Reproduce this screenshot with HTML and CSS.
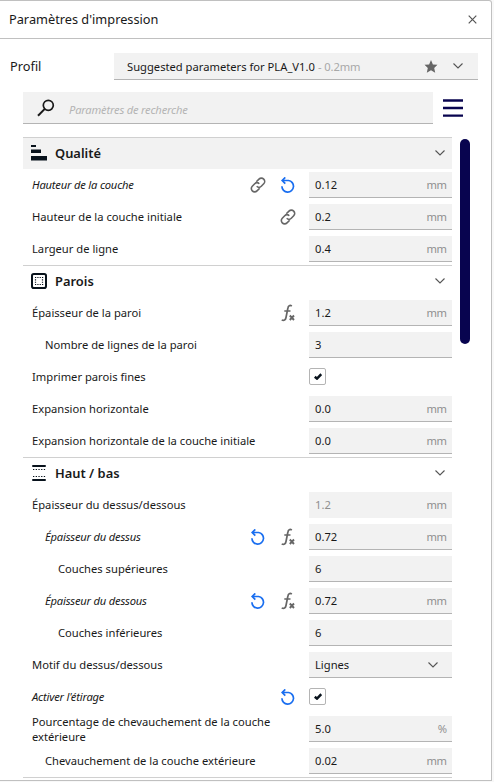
FILE: index.html
```html
<!DOCTYPE html>
<html lang="fr">
<head>
    <meta charset="UTF-8">
    <meta name="viewport" content="width=device-width, initial-scale=1.0">
    <title>Paramètres d'impression</title>
    <link rel="stylesheet" href="styles.css">
</head>
<body>

<!-- shared icons -->
<svg class="sprite">
    <symbol id="chevron" viewBox="0 0 10 6"><path d="M.5 .5L5 5L9.500 .5" fill="none" stroke="currentColor" stroke-width="1.1"/></symbol>
    <symbol id="link" viewBox="0 0 16 16"><path d="M6.300 4.800L9 2.100a3.300 3.300 0 0 1 4.700 4.700L11.300 9.200a3.300 3.300 0 0 1-4.600 0M9.700 11.200L7 13.900a3.300 3.300 0 0 1-4.700-4.700L4.700 6.800a3.300 3.300 0 0 1 4.600 0" fill="none" stroke="currentColor" stroke-width="1.6"/></symbol>
    <symbol id="undo" viewBox="0 0 16 16"><path d="M2.200 3.500H8.500a5.800 5.800 0 1 1-6.600 5.800M5.300 .4L2.200 3.500L5.300 6.600" fill="none" stroke="currentColor" stroke-width="1.7"/></symbol>
    <symbol id="fx" viewBox="0 0 16 18"><path d="M11.800 2.200C10 .7 8.300 1.700 7.900 4L6 13.500C5.600 16 4 17 1.700 16M4.300 7H10.500" fill="none" stroke="currentColor" stroke-width="1.7"/><path d="M9.800 11.500L14 16M14 11.500L9.800 16" stroke="currentColor" stroke-width="1.9"/></symbol>
    <symbol id="check" viewBox="0 0 8 7"><path d="M.8 3.700L3 5.600L7.300 1.200" fill="none" stroke="currentColor" stroke-width="2.500"/></symbol>
</svg>

<div class="panel">
    <div class="header">
        <span class="title">Paramètres d'impression</span>
        <svg class="close" viewBox="0 0 9 9"><path d="M.7 .7L8.300 8.300M8.300 .7L.7 8.300" stroke="currentColor" stroke-width="1.2"/></svg>
    </div>

    <div class="profile">
        <span class="profile-label">Profil</span>
        <div class="profile-select">
            <span class="profile-name">Suggested parameters for PLA_V1.0</span>
            <span class="profile-detail">- 0.2mm</span>
            <svg class="star" viewBox="0 0 14 13"><path d="M7 0L8.900 4.400L13.500 4.800L10.200 8L11.200 12.700L7 10.300L2.800 12.700L3.800 8L.5 4.800L5.100 4.400Z" fill="currentColor"/></svg>
            <svg class="chevron"><use href="#chevron"/></svg>
        </div>
    </div>

    <div class="search-row">
        <div class="search">
            <svg class="search-icon" viewBox="0 0 18 18"><circle cx="11.300" cy="6.300" r="5" fill="none" stroke="currentColor" stroke-width="1.700"/><path d="M7.800 9.900L1 16.700" stroke="currentColor" stroke-width="2"/></svg>
            <span class="placeholder">Paramètres de recherche</span>
        </div>
        <svg class="menu" viewBox="0 0 20 18"><path d="M0 1.500H20M0 9H20M0 16.700H20" stroke="currentColor" stroke-width="2.300"/></svg>
    </div>

    <div class="content">
        <div class="settings">
            <div class="category active">
                <svg class="category-icon" viewBox="0 0 16 16"><path d="M0 0H5V2H0ZM0 4.500H10V8H0ZM0 11H16V15.500H0Z" fill="currentColor"/></svg>
                <span class="category-name">Qualité</span>
                <svg class="chevron"><use href="#chevron"/></svg>
            </div>
            <div class="row changed">
                <span class="label">Hauteur de la couche</span>
                <svg class="icon"><use href="#link"/></svg>
                <svg class="icon undo"><use href="#undo"/></svg>
                <div class="field"><span>0.12</span><span class="unit">mm</span></div>
            </div>
            <div class="row">
                <span class="label">Hauteur de la couche initiale</span>
                <svg class="icon"><use href="#link"/></svg>
                <div class="field"><span>0.2</span><span class="unit">mm</span></div>
            </div>
            <div class="row">
                <span class="label">Largeur de ligne</span>
                <div class="field"><span>0.4</span><span class="unit">mm</span></div>
            </div>

            <div class="category">
                <svg class="category-icon" viewBox="0 0 16 16"><rect x="1" y="1" width="14" height="14" rx="1.800" fill="none" stroke="currentColor" stroke-width="2"/><path d="M4 4.500H13M4 11.500H13" stroke="currentColor" stroke-width="1.200" stroke-dasharray="1.200 1.130"/><path d="M4.500 6.330V11M11.500 6.330V11" stroke="currentColor" stroke-width="1.200" stroke-dasharray="1.200 1.130"/></svg>
                <span class="category-name">Parois</span>
                <svg class="chevron"><use href="#chevron"/></svg>
            </div>
            <div class="row">
                <span class="label">Épaisseur de la paroi</span>
                <svg class="icon fx"><use href="#fx"/></svg>
                <div class="field"><span>1.2</span><span class="unit">mm</span></div>
            </div>
            <div class="row level-1">
                <span class="label">Nombre de lignes de la paroi</span>
                <div class="field"><span>3</span></div>
            </div>
            <div class="row">
                <span class="label">Imprimer parois fines</span>
                <div class="control"><div class="checkbox"><svg><use href="#check"/></svg></div></div>
            </div>
            <div class="row">
                <span class="label">Expansion horizontale</span>
                <div class="field"><span>0.0</span><span class="unit">mm</span></div>
            </div>
            <div class="row">
                <span class="label">Expansion horizontale de la couche initiale</span>
                <div class="field"><span>0.0</span><span class="unit">mm</span></div>
            </div>

            <div class="category">
                <svg class="category-icon" viewBox="0 0 16 16"><path d="M2 1H14M2 15H14" stroke="currentColor" stroke-width="2" stroke-linecap="round"/><path d="M2 4.500H14.500M2 11.500H14.500" stroke="currentColor" stroke-width="1.200" stroke-dasharray="1.300 1.400"/></svg>
                <span class="category-name">Haut / bas</span>
                <svg class="chevron"><use href="#chevron"/></svg>
            </div>
            <div class="row">
                <span class="label">Épaisseur du dessus/dessous</span>
                <div class="field disabled"><span>1.2</span><span class="unit">mm</span></div>
            </div>
            <div class="row level-1 changed">
                <span class="label">Épaisseur du dessus</span>
                <svg class="icon undo"><use href="#undo"/></svg>
                <svg class="icon fx"><use href="#fx"/></svg>
                <div class="field"><span>0.72</span><span class="unit">mm</span></div>
            </div>
            <div class="row level-2">
                <span class="label">Couches supérieures</span>
                <div class="field"><span>6</span></div>
            </div>
            <div class="row level-1 changed">
                <span class="label">Épaisseur du dessous</span>
                <svg class="icon undo"><use href="#undo"/></svg>
                <svg class="icon fx"><use href="#fx"/></svg>
                <div class="field"><span>0.72</span><span class="unit">mm</span></div>
            </div>
            <div class="row level-2">
                <span class="label">Couches inférieures</span>
                <div class="field"><span>6</span></div>
            </div>
            <div class="row">
                <span class="label">Motif du dessus/dessous</span>
                <div class="field select"><span>Lignes</span><svg class="chevron"><use href="#chevron"/></svg></div>
            </div>
            <div class="row changed">
                <span class="label">Activer l'étirage</span>
                <svg class="icon undo"><use href="#undo"/></svg>
                <div class="control"><div class="checkbox"><svg><use href="#check"/></svg></div></div>
            </div>
            <div class="row">
                <span class="label">Pourcentage de chevauchement de la couche extérieure</span>
                <div class="field"><span>5.0</span><span class="unit">%</span></div>
            </div>
            <div class="row level-1">
                <span class="label">Chevauchement de la couche extérieure</span>
                <div class="field"><span>0.02</span><span class="unit">mm</span></div>
            </div>
        </div>
        <div class="scrollbar"></div>
    </div>
</div>

</body>
</html>
```
FILE: styles.css
```css
* {
    box-sizing: border-box;
}
body {
    margin: 0;
    background-color: #f8f8f8;
    color: #191919;
    font-family: "Noto Sans", sans-serif;
    font-size: 11.2px;
}
svg {
    display: block;
    flex: none;
}
.sprite {
    display: none;
}
.panel {
    width: 492px;
    height: 781px;
    background-color: #fff;
    border: 1px solid #c0c0c0;
    border-left: none;
    border-radius: 0 3px 0 0;
    overflow: hidden;
}
.header {
    display: flex;
    align-items: center;
    justify-content: space-between;
    height: 38px;
    padding: 0 14px 0 9px;
    border-bottom: 1px solid #c0c0c0;
    font-size: 12.75px;
}
.title {
    margin-top: -1px;
}
.close {
    width: 9px;
    height: 9px;
    color: #555;
}
.profile {
    display: flex;
    align-items: center;
    padding: 14px 13px 0 10px;
}
.profile-label {
    width: 104px;
    margin-top: -2px;
    font-size: 12.75px;
}
.profile-select {
    display: flex;
    align-items: center;
    flex: 1;
    height: 27px;
    padding: 0 15px 0 13px;
    background-color: #f2f2f2;
    border-bottom: 1px solid #b4b4b4;
}
.profile-detail {
    margin-left: 3px;
    color: #a8a8a8;
    letter-spacing: -.1px;
}
.star {
    width: 14px;
    height: 13px;
    margin: 0 15px 0 auto;
    color: #666;
}
.chevron {
    width: 10px;
    height: 6px;
    color: #555;
}
.search-row {
    display: flex;
    align-items: center;
    gap: 10px;
    padding: 12px 0 0 23px;
}
.search {
    display: flex;
    align-items: center;
    width: 410px;
    height: 32px;
    padding-left: 14px;
    background-color: #f2f2f2;
    border-bottom: 1px solid #b4b4b4;
}
.search-icon {
    width: 18px;
    height: 18px;
}
.placeholder {
    margin: 3px 0 0 14px;
    color: #b4b4b4;
    font-style: italic;
    letter-spacing: -.2px;
}
.menu {
    width: 20px;
    height: 18px;
    color: #08044f;
}
.content {
    display: flex;
    align-items: flex-start;
    gap: 8px;
    padding: 13px 0 0 23px;
}
.settings {
    width: 429px;
    border-bottom: 1px solid #d0d0d0;
}
.category {
    display: flex;
    align-items: center;
    height: 32px;
    padding: 0 7px 0 8px;
    border-top: 1px solid #d0d0d0;
}
.category.active {
    background-color: #f2f2f2;
}
.category-icon {
    width: 16px;
    height: 16px;
    margin-top: -1px;
    color: #08121c;
}
.category-name {
    flex: 1;
    margin: -2px 0 0 8px;
    font-size: 12.9px;
    font-weight: 600;
}
.category .chevron {
    margin-top: -2px;
}
.row {
    display: flex;
    align-items: center;
    height: 32px;
    padding-left: 9px;
}
.level-1 {
    padding-left: 22px;
}
.level-2 {
    padding-left: 35px;
}
.label {
    flex: 1;
    margin-top: -1px;
    line-height: 15px;
}
.changed .label {
    font-style: italic;
    letter-spacing: -.2px;
}
.icon {
    width: 16px;
    height: 16px;
    margin: 0 13px 0 1px;
    color: #666;
}
.undo {
    color: #196ef0;
}
.fx {
    height: 18px;
}
.field {
    display: flex;
    align-items: center;
    justify-content: space-between;
    width: 143px;
    height: 26px;
    padding: 0 6px;
    background-color: #f2f2f2;
    border-bottom: 1px solid #b4b4b4;
}
.select {
    padding-right: 14px;
}
.unit {
    margin-right: -.5px;
    color: #8f8f8f;
    letter-spacing: -.5px;
}
.disabled {
    color: #8f8f8f;
    border-bottom-color: #f2f2f2;
}
.control {
    width: 143px;
}
.checkbox {
    display: flex;
    align-items: center;
    justify-content: center;
    width: 17px;
    height: 17px;
    margin-top: -1px;
    background-color: #fff;
    border: 1px solid #b4b4b4;
    border-radius: 2px;
}
.checkbox svg {
    width: 8px;
    height: 7px;
    color: #08121c;
}
.scrollbar {
    width: 10px;
    height: 205px;
    margin-top: 2px;
    background-color: #08044f;
    border-radius: 5px;
}
```
